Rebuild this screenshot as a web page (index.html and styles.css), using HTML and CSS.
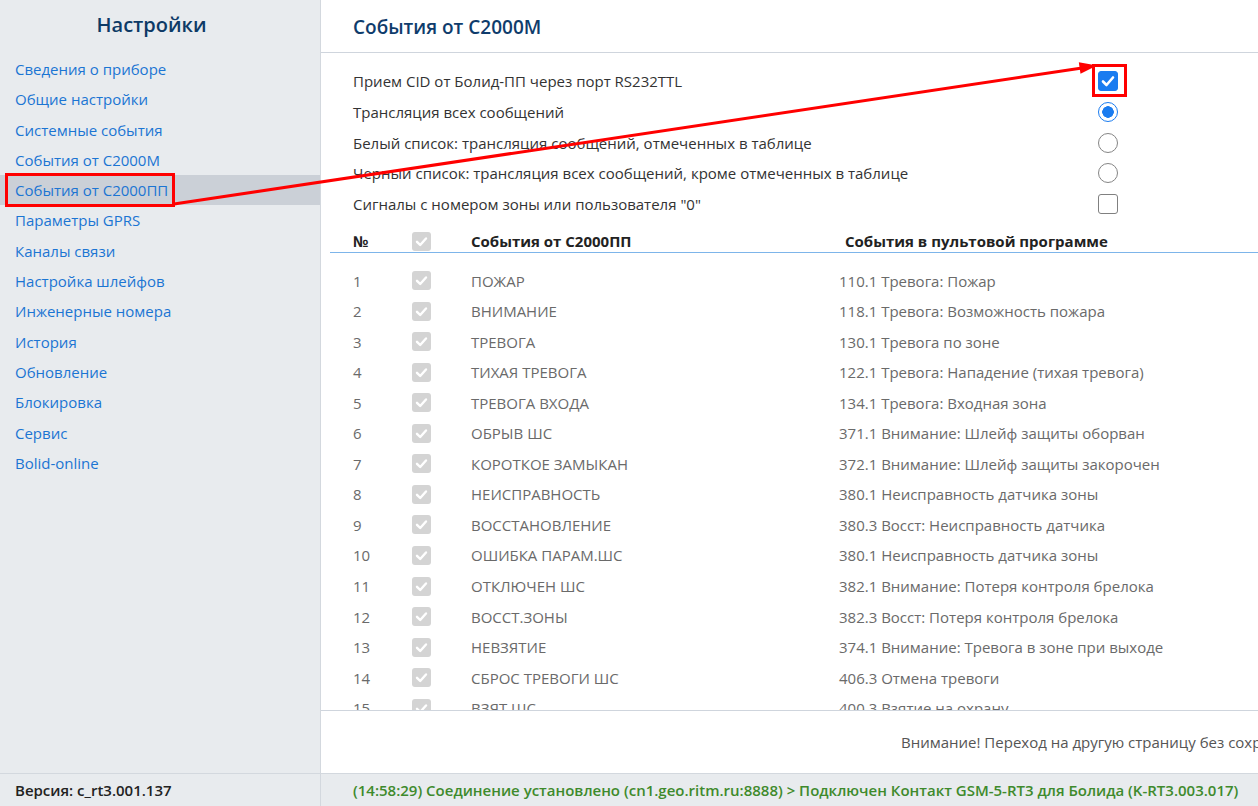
FILE: index.html
```html
<!DOCTYPE html>
<html lang="ru">
<head>
<meta charset="utf-8">
<title>Настройки</title>
<link rel="stylesheet" href="styles.css">
</head>
<body>
<div class="app">
  <aside class="sidebar">
    <div class="sidebar-title">Настройки</div>
    <nav class="nav">
      <a class="nav-item">Сведения о приборе</a>
      <a class="nav-item">Общие настройки</a>
      <a class="nav-item">Системные события</a>
      <a class="nav-item">События от С2000М</a>
      <a class="nav-item active">События от С2000ПП</a>
      <a class="nav-item">Параметры GPRS</a>
      <a class="nav-item">Каналы связи</a>
      <a class="nav-item">Настройка шлейфов</a>
      <a class="nav-item">Инженерные номера</a>
      <a class="nav-item">История</a>
      <a class="nav-item">Обновление</a>
      <a class="nav-item">Блокировка</a>
      <a class="nav-item">Сервис</a>
      <a class="nav-item">Bolid-online</a>
    </nav>
  </aside>
  <main class="main">
    <header class="main-header">События от С2000М</header>
    <section class="options">
      <div class="opt-label">Прием CID от Болид-ПП через порт RS232TTL</div>
      <span class="cb cb-on"><svg viewBox="0 0 20 20" width="20" height="20"><path d="M5 10.5 L8.5 14 L15 6.5" fill="none" stroke="#fff" stroke-width="2.6" stroke-linecap="round" stroke-linejoin="round"/></svg></span>
      <div class="opt-label">Трансляция всех сообщений</div>
      <span class="radio radio-on"></span>
      <div class="opt-label">Белый список: трансляция сообщений, отмеченных в таблице</div>
      <span class="radio"></span>
      <div class="opt-label">Черный список: трансляция всех сообщений, кроме отмеченных в таблице</div>
      <span class="radio"></span>
      <div class="opt-label">Сигналы с номером зоны или пользователя "0"</div>
      <span class="cb"></span>
    </section>
    <section class="table-area">
      <div class="tbl">
        <div class="tr th">
          <div class="c-num">№</div>
          <div class="c-chk"><span class="dcb"><svg viewBox="0 0 19 19" width="19" height="19"><path d="M5 9.8 L8.2 13 L14 6.5" fill="none" stroke="#fff" stroke-width="2.4" stroke-linecap="round" stroke-linejoin="round"/></svg></span></div>
          <div class="c-name">События от С2000ПП</div>
          <div class="c-pult">События в пультовой программе</div>
        </div>
        <div class="tbody">
          <div class="tr"><div class="c-num">1</div><div class="c-chk"><span class="dcb"><svg viewBox="0 0 19 19" width="19" height="19"><path d="M5 9.8 L8.2 13 L14 6.5" fill="none" stroke="#fff" stroke-width="2.4" stroke-linecap="round" stroke-linejoin="round"/></svg></span></div><div class="c-name">ПОЖАР</div><div class="c-pult">110.1 Тревога: Пожар</div></div>
          <div class="tr"><div class="c-num">2</div><div class="c-chk"><span class="dcb"><svg viewBox="0 0 19 19" width="19" height="19"><path d="M5 9.8 L8.2 13 L14 6.5" fill="none" stroke="#fff" stroke-width="2.4" stroke-linecap="round" stroke-linejoin="round"/></svg></span></div><div class="c-name">ВНИМАНИЕ</div><div class="c-pult">118.1 Тревога: Возможность пожара</div></div>
          <div class="tr"><div class="c-num">3</div><div class="c-chk"><span class="dcb"><svg viewBox="0 0 19 19" width="19" height="19"><path d="M5 9.8 L8.2 13 L14 6.5" fill="none" stroke="#fff" stroke-width="2.4" stroke-linecap="round" stroke-linejoin="round"/></svg></span></div><div class="c-name">ТРЕВОГА</div><div class="c-pult">130.1 Тревога по зоне</div></div>
          <div class="tr"><div class="c-num">4</div><div class="c-chk"><span class="dcb"><svg viewBox="0 0 19 19" width="19" height="19"><path d="M5 9.8 L8.2 13 L14 6.5" fill="none" stroke="#fff" stroke-width="2.4" stroke-linecap="round" stroke-linejoin="round"/></svg></span></div><div class="c-name">ТИХАЯ ТРЕВОГА</div><div class="c-pult">122.1 Тревога: Нападение (тихая тревога)</div></div>
          <div class="tr"><div class="c-num">5</div><div class="c-chk"><span class="dcb"><svg viewBox="0 0 19 19" width="19" height="19"><path d="M5 9.8 L8.2 13 L14 6.5" fill="none" stroke="#fff" stroke-width="2.4" stroke-linecap="round" stroke-linejoin="round"/></svg></span></div><div class="c-name">ТРЕВОГА ВХОДА</div><div class="c-pult">134.1 Тревога: Входная зона</div></div>
          <div class="tr"><div class="c-num">6</div><div class="c-chk"><span class="dcb"><svg viewBox="0 0 19 19" width="19" height="19"><path d="M5 9.8 L8.2 13 L14 6.5" fill="none" stroke="#fff" stroke-width="2.4" stroke-linecap="round" stroke-linejoin="round"/></svg></span></div><div class="c-name">ОБРЫВ ШС</div><div class="c-pult">371.1 Внимание: Шлейф защиты оборван</div></div>
          <div class="tr"><div class="c-num">7</div><div class="c-chk"><span class="dcb"><svg viewBox="0 0 19 19" width="19" height="19"><path d="M5 9.8 L8.2 13 L14 6.5" fill="none" stroke="#fff" stroke-width="2.4" stroke-linecap="round" stroke-linejoin="round"/></svg></span></div><div class="c-name">КОРОТКОЕ ЗАМЫКАН</div><div class="c-pult">372.1 Внимание: Шлейф защиты закорочен</div></div>
          <div class="tr"><div class="c-num">8</div><div class="c-chk"><span class="dcb"><svg viewBox="0 0 19 19" width="19" height="19"><path d="M5 9.8 L8.2 13 L14 6.5" fill="none" stroke="#fff" stroke-width="2.4" stroke-linecap="round" stroke-linejoin="round"/></svg></span></div><div class="c-name">НЕИСПРАВНОСТЬ</div><div class="c-pult">380.1 Неисправность датчика зоны</div></div>
          <div class="tr"><div class="c-num">9</div><div class="c-chk"><span class="dcb"><svg viewBox="0 0 19 19" width="19" height="19"><path d="M5 9.8 L8.2 13 L14 6.5" fill="none" stroke="#fff" stroke-width="2.4" stroke-linecap="round" stroke-linejoin="round"/></svg></span></div><div class="c-name">ВОССТАНОВЛЕНИЕ</div><div class="c-pult">380.3 Восст: Неисправность датчика</div></div>
          <div class="tr"><div class="c-num">10</div><div class="c-chk"><span class="dcb"><svg viewBox="0 0 19 19" width="19" height="19"><path d="M5 9.8 L8.2 13 L14 6.5" fill="none" stroke="#fff" stroke-width="2.4" stroke-linecap="round" stroke-linejoin="round"/></svg></span></div><div class="c-name">ОШИБКА ПАРАМ.ШС</div><div class="c-pult">380.1 Неисправность датчика зоны</div></div>
          <div class="tr"><div class="c-num">11</div><div class="c-chk"><span class="dcb"><svg viewBox="0 0 19 19" width="19" height="19"><path d="M5 9.8 L8.2 13 L14 6.5" fill="none" stroke="#fff" stroke-width="2.4" stroke-linecap="round" stroke-linejoin="round"/></svg></span></div><div class="c-name">ОТКЛЮЧЕН ШС</div><div class="c-pult">382.1 Внимание: Потеря контроля брелока</div></div>
          <div class="tr"><div class="c-num">12</div><div class="c-chk"><span class="dcb"><svg viewBox="0 0 19 19" width="19" height="19"><path d="M5 9.8 L8.2 13 L14 6.5" fill="none" stroke="#fff" stroke-width="2.4" stroke-linecap="round" stroke-linejoin="round"/></svg></span></div><div class="c-name">ВОССТ.ЗОНЫ</div><div class="c-pult">382.3 Восст: Потеря контроля брелока</div></div>
          <div class="tr"><div class="c-num">13</div><div class="c-chk"><span class="dcb"><svg viewBox="0 0 19 19" width="19" height="19"><path d="M5 9.8 L8.2 13 L14 6.5" fill="none" stroke="#fff" stroke-width="2.4" stroke-linecap="round" stroke-linejoin="round"/></svg></span></div><div class="c-name">НЕВЗЯТИЕ</div><div class="c-pult">374.1 Внимание: Тревога в зоне при выходе</div></div>
          <div class="tr"><div class="c-num">14</div><div class="c-chk"><span class="dcb"><svg viewBox="0 0 19 19" width="19" height="19"><path d="M5 9.8 L8.2 13 L14 6.5" fill="none" stroke="#fff" stroke-width="2.4" stroke-linecap="round" stroke-linejoin="round"/></svg></span></div><div class="c-name">СБРОС ТРЕВОГИ ШС</div><div class="c-pult">406.3 Отмена тревоги</div></div>
          <div class="tr"><div class="c-num">15</div><div class="c-chk"><span class="dcb"><svg viewBox="0 0 19 19" width="19" height="19"><path d="M5 9.8 L8.2 13 L14 6.5" fill="none" stroke="#fff" stroke-width="2.4" stroke-linecap="round" stroke-linejoin="round"/></svg></span></div><div class="c-name">ВЗЯТ ШС</div><div class="c-pult">400.3 Взятие на охрану</div></div>
          <div class="tr"><div class="c-num">16</div><div class="c-chk"><span class="dcb"><svg viewBox="0 0 19 19" width="19" height="19"><path d="M5 9.8 L8.2 13 L14 6.5" fill="none" stroke="#fff" stroke-width="2.4" stroke-linecap="round" stroke-linejoin="round"/></svg></span></div><div class="c-name">СНЯТ ШС</div><div class="c-pult">400.1 Снятие с охраны</div></div>
        </div>
      </div>
    </section>
    <div class="notice">Внимание! Переход на другую страницу без сохранения изменений приведет к их потере</div>
  </main>
  <div class="foot-left">Версия: c_rt3.001.137</div>
  <div class="foot-right">(14:58:29) Соединение установлено (cn1.geo.ritm.ru:8888) &gt; Подключен Контакт GSM-5-RT3 для Болида (K-RT3.003.017)</div>
</div>
<svg class="annot" width="1258" height="806" viewBox="0 0 1258 806">
  <rect x="6.5" y="174.5" width="167" height="31" fill="none" stroke="#f00" stroke-width="3"/>
  <line x1="174" y1="204" x2="1082" y2="68" stroke="#f00" stroke-width="3"/>
  <polygon points="1097,65.5 1080.5,73.8 1078.8,62.2" fill="#f00"/>
  <rect x="1093.5" y="65.5" width="32" height="30" fill="none" stroke="#f00" stroke-width="3"/>
</svg>
</body>
</html>
```
FILE: styles.css
```css
* { box-sizing: border-box; }
html, body { margin: 0; padding: 0; }
body {
  width: 1258px;
  height: 806px;
  overflow: hidden;
  font-family: "Open Sans", "Noto Sans", Arial, sans-serif;
  font-size: 15px;
  color: #333;
  background: #fff;
}
.app {
  display: grid;
  grid-template-columns: 321px 1fr;
  grid-template-rows: 773px 33px;
  height: 806px;
}
.sidebar {
  background: #e8ebee;
  border-right: 1px solid #d3d8de;
}
.sidebar-title {
  height: 54px;
  padding-right: 17px;
  padding-top: 10px;
  text-align: center;
  font-size: 20px;
  font-weight: 600;
  color: #0d3a66;
  line-height: 30px;
}
.nav { display: flex; flex-direction: column; }
.nav-item {
  display: block;
  height: 30.3px;
  line-height: 30.3px;
  padding-left: 15px;
  color: #1b75d3;
  font-size: 15px;
  white-space: nowrap;
}
.nav-item.active { background: #cbd0d7; }
.main {
  display: flex;
  flex-direction: column;
  min-width: 0;
  overflow: hidden;
}
.main-header {
  height: 53px;
  flex: none;
  border-bottom: 1px solid #cfd5dd;
  padding-left: 32px;
  font-size: 19px;
  font-weight: 600;
  color: #0f3c6c;
  line-height: 54px;
}
.options {
  flex: none;
  display: grid;
  grid-template-columns: 745px 20px;
  grid-auto-rows: 30.7px;
  align-items: center;
  padding: 13px 0 0 32px;
}
.opt-label { color: #333; white-space: nowrap; }
.cb, .radio {
  display: block;
  width: 20px;
  height: 20px;
  background: #fff;
}
.cb { border: 1px solid #808080; border-radius: 3px; }
.cb-on { background: #1a7cf0; border-color: #1a7cf0; }
.cb-on svg { display: block; margin: -1px; }
.radio { border: 1px solid #858585; border-radius: 50%; }
.radio-on {
  border-color: #1a7cf0;
  background: radial-gradient(circle, #1a7cf0 0 5.5px, #fff 6px);
}
.table-area {
  flex: 1;
  min-height: 0;
  overflow: hidden;
  border-bottom: 1px solid #cfd5dd;
  padding: 10px 0 0 9px;
}
.tbl { width: 100%; }
.tr {
  display: flex;
  align-items: center;
  height: 30.54px;
  white-space: nowrap;
  color: #6a6a6a;
}
.th {
  height: 24px;
  border-bottom: 1px solid #7db5ea;
  color: #222;
  font-weight: 700;
  align-items: flex-start;
  line-height: 24px;
}
.th .c-chk { padding-top: 3px; }
.th .c-pult { padding-left: 6px; }
.tbody { padding-top: 12px; }
.c-num { width: 82px; padding-left: 23px; flex: none; }
.c-chk { width: 59px; flex: none; display: flex; }
.c-name { width: 368px; flex: none; }
.c-pult { flex: 1; }
.dcb {
  display: block;
  width: 19px;
  height: 19px;
  border-radius: 3px;
  background: #d4d4d4;
}
.dcb svg { display: block; }
.notice {
  height: 62px;
  flex: none;
  line-height: 62px;
  padding-left: 580px;
  white-space: nowrap;
  overflow: hidden;
  color: #555;
}
.foot-left, .foot-right {
  background: #e8ebee;
  border-top: 1px solid #d3d8de;
  line-height: 32px;
  font-weight: 600;
  white-space: nowrap;
  overflow: hidden;
}
.foot-left {
  padding-left: 15px;
  color: #222;
  border-right: 1px solid #d3d8de;
}
.foot-right {
  padding-left: 32px;
  color: #3e8a2c;
}
.annot {
  position: fixed;
  left: 0;
  top: 0;
  pointer-events: none;
}
```
